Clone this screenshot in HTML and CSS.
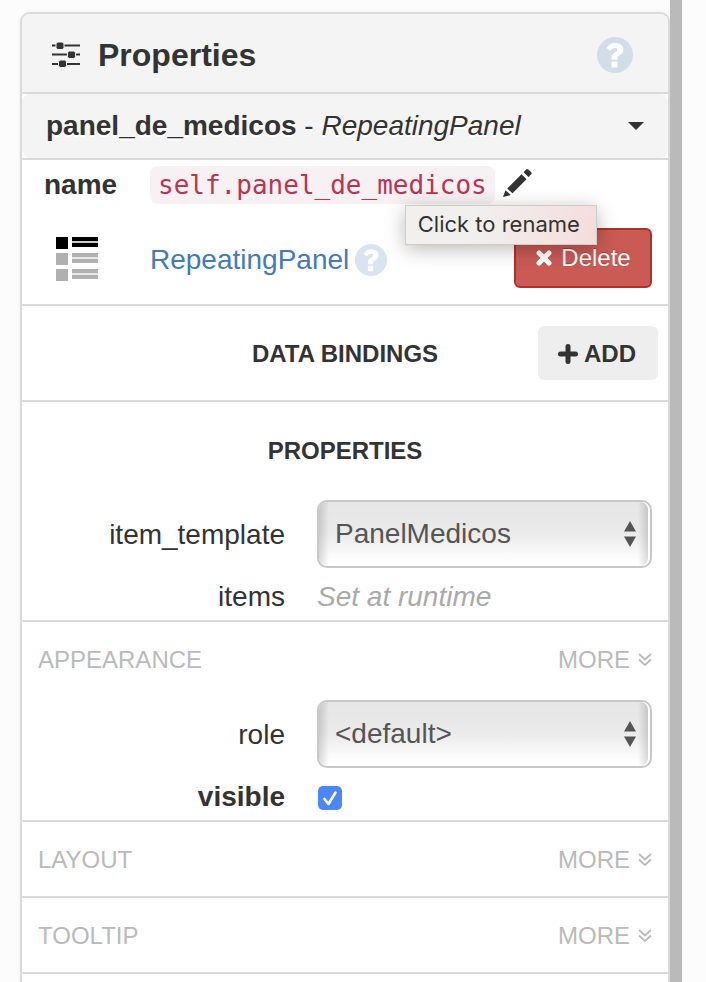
FILE: index.html
```html
<!DOCTYPE html>
<html lang="en">
<head>
<meta charset="utf-8">
<title>Properties</title>
<link rel="stylesheet" href="styles.css">
</head>
<body>
<svg class="symbols" aria-hidden="true">
  <symbol id="help" viewBox="0 0 36 36">
    <circle cx="18" cy="18" r="18" fill="currentColor"/>
    <path d="M9.500 11C11.500 7.500 14.500 6 18.200 6c4.600 0 8.300 2.600 8.300 6.400 0 3.300-2 4.700-4 5.900-1.500.9-2 1.500-2 3.200v1.200h-6v-1.600c0-3 1.200-4.400 3.500-5.700 1.600-.9 2.300-1.500 2.300-2.500 0-1.200-1.200-1.800-2.500-1.800-1.800 0-2.800.9-4.300 2.800z" fill="#fff"/>
    <rect x="14.500" y="24.500" width="6" height="6" fill="#fff"/>
  </symbol>
  <symbol id="chevrons" viewBox="0 0 14 14">
    <path d="M1 1l6 5.500L13 1M1 6.500L7 12l6-5.500" fill="none" stroke="currentColor" stroke-width="1.700"/>
  </symbol>
  <symbol id="updown" viewBox="0 0 12 26">
    <path d="M6 0l6 10.500H0zM6 26l6-10.500H0z" fill="currentColor"/>
  </symbol>
</svg>
<main class="panel">
  <header class="panel-head">
    <svg class="sliders" viewBox="0 0 28 26" aria-hidden="true">
      <path d="M0 3.500h28M0 12.500h28M0 22h28" stroke="#333" stroke-width="2.200"/>
      <g fill="#333" stroke="#f4f4f4" stroke-width="1">
        <rect x="4" y="0" width="8" height="7.500" rx="2"/>
        <rect x="15.500" y="9" width="8" height="7.500" rx="2"/>
        <rect x="6.500" y="18" width="8" height="7.500" rx="2"/>
      </g>
    </svg>
    <h1>Properties</h1>
    <a class="help help-large" href="#" aria-label="Help"><svg><use href="#help"/></svg></a>
  </header>
  <div class="picker-bar">
    <button class="component-picker" type="button">
      <span><b>panel_de_medicos</b> - <i>RepeatingPanel</i></span>
      <svg class="caret" viewBox="0 0 16 8" aria-hidden="true"><path d="M0 0h16L8 8z" fill="#333"/></svg>
    </button>
  </div>
  <section class="identity">
    <div class="identity-row">
      <b>name</b>
      <code>self.panel_de_medicos</code>
      <div class="rename">
        <button type="button" aria-label="Rename" aria-describedby="rename-tip">
          <svg viewBox="0 0 30 30" aria-hidden="true"><path d="M0 29l2.500-6.800 5.300 4.800zM4.200 20.500L18.500 6.200l5 5L9.500 25.200zM20.500 4.300l2.500-2.600q1.300-1.200 2.600 0l2.400 2.400q1.200 1.200 0 2.500l-2.500 2.500z" fill="#333"/></svg>
        </button>
        <div class="tooltip" id="rename-tip" role="tooltip">Click to rename</div>
      </div>
    </div>
    <div class="identity-row">
      <svg class="type-icon" viewBox="0 0 44 46" aria-hidden="true">
        <path d="M17 4h26v4H17z" fill="#ccc"/>
        <path d="M17 20h26v4H17zM17 36h26v4H17z" fill="#e8e8e8"/>
        <path d="M1 1h12v12H1zM17 1h26v4H17zM17 7h26v4H17z" fill="#000"/>
        <path d="M1 17h12v12H1zM17 17h26v4H17zM17 23h26v4H17zM1 33h12v12H1zM17 33h26v4H17zM17 39h26v4H17z" fill="#b0b0b0"/>
      </svg>
      <span class="type"><a href="#">RepeatingPanel</a>
      <a class="help" href="#" aria-label="RepeatingPanel help"><svg><use href="#help"/></svg></a></span>
      <button class="delete" type="button">
        <svg viewBox="0 0 18 18" aria-hidden="true"><path d="M4 4l10 10M14 4L4 14" stroke="#fff" stroke-width="5" stroke-linecap="round"/></svg>
        Delete
      </button>
    </div>
  </section>
  <section class="bindings">
    <h2>DATA BINDINGS</h2>
    <button class="add" type="button">
      <svg viewBox="0 0 20 20" aria-hidden="true"><path d="M10 2.500v15M2.500 10h15" stroke="#333" stroke-width="5" stroke-linecap="round"/></svg>
      ADD
    </button>
  </section>
  <section class="group">
    <h2 class="group-title">PROPERTIES</h2>
    <div class="field">
      <label for="template">item_template</label>
      <div class="select"><select id="template"><option>PanelMedicos</option></select><svg aria-hidden="true"><use href="#updown"/></svg></div>
    </div>
    <div class="field field-small">
      <span>items</span>
      <i class="runtime">Set at runtime</i>
    </div>
  </section>
  <section class="group">
    <div class="group-bar"><h2>APPEARANCE</h2><button type="button">MORE <svg aria-hidden="true"><use href="#chevrons"/></svg></button></div>
    <div class="field">
      <label for="role">role</label>
      <div class="select"><select id="role"><option>&lt;default&gt;</option></select><svg aria-hidden="true"><use href="#updown"/></svg></div>
    </div>
    <div class="field field-small">
      <label for="visible"><b>visible</b></label>
      <div class="check"><input type="checkbox" id="visible" checked><svg viewBox="0 0 24 24" aria-hidden="true"><path d="M6.500 13l4 5L17.500 6.500" fill="none" stroke="#fff" stroke-width="2.600" stroke-linecap="round" stroke-linejoin="round"/></svg></div>
    </div>
  </section>
  <section class="group">
    <div class="group-bar"><h2>LAYOUT</h2><button type="button">MORE <svg aria-hidden="true"><use href="#chevrons"/></svg></button></div>
  </section>
  <section class="group">
    <div class="group-bar"><h2>TOOLTIP</h2><button type="button">MORE <svg aria-hidden="true"><use href="#chevrons"/></svg></button></div>
  </section>
</main>
<div class="splitter"></div>
</body>
</html>
```
FILE: styles.css
```css
* { box-sizing: border-box; }

body {
  margin: 0;
  padding: 0 24px 0 20px;
  min-height: 100vh;
  display: flex;
  background: #fcfcfc;
  color: #333;
  font: 28px/34px "Liberation Sans", Arial, sans-serif;
}

h1, h2 { margin: 0; }
h1 { font-size: 32px; }
h2 { font-size: 24px; }

button {
  border: 0;
  padding: 0;
  background: none;
  color: inherit;
  font: inherit;
  cursor: pointer;
}

a { color: #447bb5; text-decoration: none; }
svg { display: block; flex: none; }
.symbols { position: absolute; width: 0; height: 0; }

.panel {
  flex: 1;
  min-width: 0;
  margin-top: 12px;
  border: 2px solid #dadada;
  border-bottom: 0;
  border-radius: 10px 10px 0 0;
  background: #fff;
  box-shadow: 0 0 4px rgba(0, 0, 0, 0.06);
}

.splitter { width: 12px; background: #bababa; }

.panel > * { border-bottom: 2px solid #dadada; }

.panel-head {
  display: flex;
  align-items: center;
  gap: 18px;
  height: 80px;
  padding: 4px 35px 0 30px;
  background: #f4f4f4;
  border-radius: 8px 8px 0 0;
}

.sliders { width: 28px; height: 26px; }

.help { color: #d9e4f1; }
.help svg { width: 32px; height: 32px; }
.help-large { margin-left: auto; color: #d3ddea; }
.help-large svg { width: 36px; height: 36px; }

.component-picker {
  display: flex;
  align-items: center;
  justify-content: space-between;
  width: 100%;
  height: 64px;
  padding: 0 24px;
  background: #f4f4f4;
  border-radius: 8px;
  text-shadow: 0 2px #fff;
}

.caret { width: 16px; height: 8px; }

.identity {
  display: grid;
  gap: 24px;
  padding: 6px 16px 16px 22px;
}

.identity-row {
  display: grid;
  grid-template-columns: 98px auto 1fr;
  align-items: center;
  column-gap: 8px;
}

code {
  padding: 2px 8px;
  border-radius: 8px;
  background: #f8f1f4;
  color: #ba3551;
  font: 26px/34px "DejaVu Sans Mono", monospace;
}

.rename { position: relative; width: 30px; height: 34px; }
.rename svg { width: 30px; height: 30px; }

.tooltip {
  position: absolute;
  z-index: 1;
  top: 37px;
  right: -64px;
  width: 192px;
  height: 40px;
  padding-left: 12px;
  border: 1px solid #cfcccc;
  background: linear-gradient(100deg, #f1f0ef 35%, #f4dddb);
  box-shadow: 0 4px 20px rgba(0, 0, 0, 0.28);
  font: 22px/36px Inter, sans-serif;
  white-space: nowrap;
}

.type-icon { width: 44px; height: 48px; margin-left: 11px; padding-top: 2px; }
.type { display: flex; align-items: center; gap: 6px; padding-top: 4px; }

.delete {
  display: flex;
  justify-content: center;
  align-items: center;
  gap: 8px;
  justify-self: end;
  width: 138px;
  height: 60px;
  border: 2px solid #ad322c;
  border-radius: 6px;
  background: #c95b54;
  color: #fff;
  font-size: 24px;
  text-shadow: 0 -1px rgba(0, 0, 0, 0.25);
}

.delete svg { width: 18px; height: 18px; }

.bindings {
  display: grid;
  grid-template-columns: 1fr auto 1fr;
  align-items: center;
  padding: 20px 10px;
}

.bindings h2 { grid-column: 2; padding-top: 2px; }

.add {
  display: flex;
  justify-content: center;
  align-items: center;
  gap: 6px;
  justify-self: end;
  width: 120px;
  height: 54px;
  padding: 2px 2px 0 0;
  border-radius: 6px;
  background: #eee;
  font-size: 24px;
  font-weight: bold;
}

.add svg { width: 20px; height: 20px; }

.group { padding: 0 16px; }
.group-title { padding: 32px 0; text-align: center; }

.group-bar {
  display: flex;
  align-items: center;
  justify-content: space-between;
  height: 74px;
  padding-top: 2px;
  color: #bababa;
  font-size: 24px;
}

.group-bar h2 { font-weight: normal; }
.group-bar button { display: flex; align-items: center; gap: 8px; }
.group-bar svg { width: 14px; height: 14px; }
.group-bar + .field { margin-top: 4px; }

.field {
  display: grid;
  grid-template-columns: 247fr 335fr;
  column-gap: 32px;
  align-items: center;
}

.field > :first-child { padding-top: 2px; text-align: right; }
.field-small { height: 48px; margin-top: 4px; }
.runtime { padding-top: 2px; color: #aaa; }

.select {
  position: relative;
  height: 68px;
  padding-right: 2px;
  border: 2px solid #c8c8c8;
  border-radius: 10px;
  background: #fff;
}

.select select {
  appearance: none;
  display: block;
  width: 100%;
  height: 100%;
  padding: 0 40px 0 16px;
  border: 0;
  border-radius: 8px;
  background:
    linear-gradient(90deg, rgba(0, 0, 0, 0.14), transparent 10px, transparent calc(100% - 10px), rgba(0, 0, 0, 0.14)),
    linear-gradient(#e5e5e5, #ebebeb 50%, #fff 95%);
  color: #555;
  font: inherit;
}

.select svg {
  position: absolute;
  top: 19px;
  right: 14px;
  width: 12px;
  height: 26px;
  color: #555;
  pointer-events: none;
}

.check { position: relative; width: 24px; height: 24px; margin: 4px 0 0 1px; }

.check input {
  appearance: none;
  display: block;
  width: 24px;
  height: 24px;
  margin: 0;
  border-radius: 5px;
  background: #4b88f5;
}

.check svg { position: absolute; inset: 0; pointer-events: none; }
```
